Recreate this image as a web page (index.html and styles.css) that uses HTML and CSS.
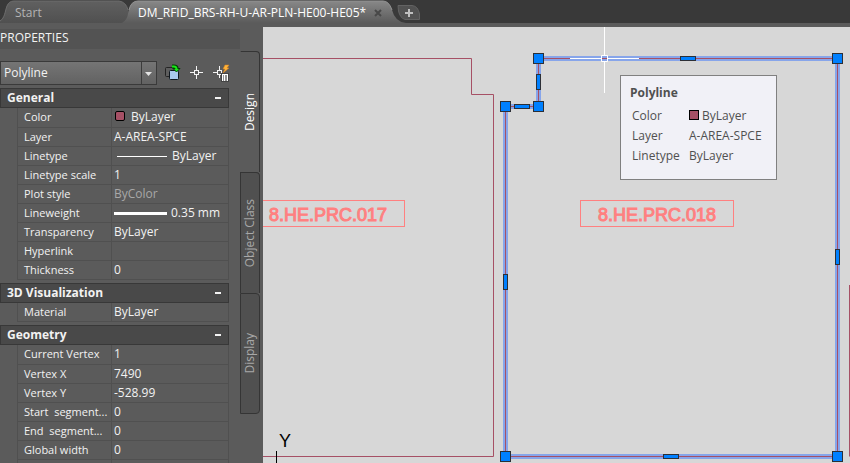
FILE: index.html
```html
<!DOCTYPE html>
<html lang="en">
<head>
<meta charset="utf-8">
<meta name="viewport" content="width=device-width, initial-scale=1">
<title>DM_RFID_BRS-RH-U-AR-PLN-HE00-HE05</title>
<link rel="stylesheet" href="styles.css">
</head>
<body>
<div class="app">
  <nav class="file-tabs" aria-label="Open files">
    <button class="file-tab file-tab-start" type="button">
      <svg class="tab-shape" width="142" height="23" viewBox="0 0 142 23" aria-hidden="true">
        <defs><linearGradient id="idle" x1="0" y1="0" x2="0" y2="1"><stop offset="0" stop-color="#606060"/><stop offset="1" stop-color="#505050"/></linearGradient></defs>
        <path d="M0 23V21C5 18 5 11 7 6Q9 1 14 1H119Q126 2 128 10Q130 20 138 23Z" fill="url(#idle)"/>
        <path d="M0 21C5 18 5 11 7 6Q9 1 14 1H119Q126 2 128 10" fill="none" stroke="#6d6d6d"/>
      </svg>
      <span>Start</span>
    </button>
    <button class="file-tab file-tab-active" type="button">
      <svg class="tab-shape" width="286" height="23" viewBox="0 0 286 23" aria-hidden="true">
        <defs><linearGradient id="live" x1="0" y1="0" x2="0" y2="1"><stop offset="0" stop-color="#888888"/><stop offset="1" stop-color="#5b5b5b"/></linearGradient></defs>
        <path d="M0 23Q5 20 6 14Q8 1 16 1H261Q267 1 270 10Q273 22 284 23Z" fill="url(#live)"/>
        <path d="M7 10Q9 1 16 1H261Q267 1 270 10" fill="none" stroke="#929292"/>
      </svg>
      <span>DM_RFID_BRS-RH-U-AR-PLN-HE00-HE05*</span>
      <svg class="close" width="8" height="8" viewBox="0 0 8 8" aria-hidden="true"><path d="M1 1L7 7M7 1L1 7" stroke="#484848" stroke-width="2"/></svg>
    </button>
    <button class="new-tab" type="button" aria-label="New drawing">
      <svg width="24" height="16" viewBox="0 0 24 16" aria-hidden="true">
        <path d="M1 .5H15Q21 1 22.500 9V14.500H8Q3 13 1.500 6Z" fill="#525252" stroke="#636363"/>
        <path d="M8 8H16M12 4V12" stroke="#c0c0c0" stroke-width="2"/>
      </svg>
    </button>
  </nav>

  <main class="workspace">
    <aside class="palette">
      <div class="palette-body">
        <h1 class="palette-title">PROPERTIES</h1>
        <div class="toolbar">
          <div class="picker">
            <select aria-label="Object type"><option>Polyline</option></select>
            <svg class="picker-arrow" width="15" height="22" viewBox="0 0 15 22" aria-hidden="true"><path d="M.5 0V22" stroke="#3c3c3c"/><path d="M4 10H11L7.500 14Z" fill="#e4e4e4"/></svg>
          </div>
          <button class="tool" type="button" aria-label="Toggle PICKADD">
            <svg width="16" height="18" viewBox="0 0 16 18" aria-hidden="true">
              <rect x=".5" y="3.500" width="9" height="9" rx="1" fill="#5e5e5e" stroke="#242424"/>
              <rect x="4.500" y="6.500" width="9" height="9" rx="1" fill="#a9c9ee" stroke="#101820"/>
              <path d="M7 2.500H9Q11.500 2.500 11.500 4V5" fill="none" stroke="#063d06" stroke-width="4"/>
              <path d="M8 4.500H15L11.500 8Z" fill="#18e818" stroke="#063d06"/>
              <path d="M7 2.500H9Q11.500 2.500 11.500 5" fill="none" stroke="#18e818" stroke-width="2"/>
            </svg>
          </button>
          <button class="tool" type="button" aria-label="Select objects">
            <svg width="14" height="14" viewBox="0 0 14 14" aria-hidden="true"><path d="M6.500 0V4M6.500 9V13M0 6.500H4M9 6.500H13" stroke="#f4f4f4"/><rect x="4.500" y="4.500" width="4" height="4" fill="none" stroke="#f4f4f4"/></svg>
          </button>
          <button class="tool" type="button" aria-label="Quick select">
            <svg width="17" height="18" viewBox="0 0 17 18" aria-hidden="true"><path d="M6.500 2V6M6.500 11V14M0 8.500H4" stroke="#f4f4f4"/><rect x="4.500" y="6.500" width="4" height="4" fill="none" stroke="#f4f4f4"/><path d="M12 1H16L14 4H16L10 9L12 5H10Z" fill="#ffb43a" stroke="#d8801c" stroke-width=".5"/><rect x="8.500" y="9.500" width="7" height="8" fill="#fff" stroke="#444"/><path d="M10 12H14M10 14H14M10 16H14" stroke="#222" stroke-dasharray="1 1 2"/></svg>
          </button>
        </div>

        <section class="group">
          <h2><button type="button">General<span class="collapse"></span></button></h2>
          <table>
            <tr><th scope="row">Color</th><td><span class="swatch"></span>ByLayer</td></tr>
            <tr><th scope="row">Layer</th><td>A-AREA-SPCE</td></tr>
            <tr><th scope="row">Linetype</th><td><span class="line line-thin"></span>ByLayer</td></tr>
            <tr><th scope="row">Linetype scale</th><td>1</td></tr>
            <tr><th scope="row">Plot style</th><td class="muted">ByColor</td></tr>
            <tr><th scope="row">Lineweight</th><td><span class="line line-thick"></span>0.35 mm</td></tr>
            <tr><th scope="row">Transparency</th><td>ByLayer</td></tr>
            <tr><th scope="row">Hyperlink</th><td></td></tr>
            <tr><th scope="row">Thickness</th><td>0</td></tr>
          </table>
        </section>
        <section class="group">
          <h2><button type="button">3D Visualization<span class="collapse"></span></button></h2>
          <table>
            <tr><th scope="row">Material</th><td>ByLayer</td></tr>
          </table>
        </section>
        <section class="group">
          <h2><button type="button">Geometry<span class="collapse"></span></button></h2>
          <table>
            <tr><th scope="row">Current Vertex</th><td>1</td></tr>
            <tr><th scope="row">Vertex X</th><td>7490</td></tr>
            <tr><th scope="row">Vertex Y</th><td>-528.99</td></tr>
            <tr><th scope="row">Start&nbsp; segment...</th><td>0</td></tr>
            <tr><th scope="row">End&nbsp; segment...</th><td>0</td></tr>
            <tr><th scope="row">Global width</th><td>0</td></tr>
            <tr><th scope="row"></th><td>0</td></tr>
          </table>
        </section>
      </div>
      <div class="side-tabs">
        <button class="side-tab side-tab-active" type="button"><span>Design</span></button>
        <button class="side-tab" type="button"><span>Object Class</span></button>
        <button class="side-tab" type="button"><span>Display</span></button>
      </div>
    </aside>

    <section class="canvas" aria-label="Drawing">
      <svg class="drawing" width="100%" height="100%">
        <g class="outline">
          <path d="M-1 31.500H208.500V67.500H230.500V429.500H-1"/>
          <path d="M586.500 258V429.500"/>
        </g>
        <g class="tag">
          <rect x="-10.500" y="173.500" width="152" height="26"/>
          <rect x="317.500" y="173.500" width="153" height="26"/>
          <text x="65" y="194">8.HE.PRC.017</text>
          <text x="394" y="194">8.HE.PRC.018</text>
        </g>
        <path class="halo" d="M275.500 31.500H574.500V429.500H242.500V79.500H275.500Z"/>
        <path class="edge" d="M275.500 31.500H574.500V429.500H242.500V79.500H275.500Z"/>
        <g class="grip">
          <rect x="270.500" y="26.500" width="10" height="10"/>
          <rect x="569.500" y="26.500" width="10" height="10"/>
          <rect x="569.500" y="424.500" width="10" height="10"/>
          <rect x="237.500" y="424.500" width="10" height="10"/>
          <rect x="237.500" y="74.500" width="10" height="10"/>
          <rect x="270.500" y="74.500" width="10" height="10"/>
          <rect x="417.500" y="29.500" width="15" height="4"/>
          <rect x="400.500" y="427.500" width="15" height="4"/>
          <rect x="251.500" y="77.500" width="15" height="4"/>
          <rect x="273.500" y="47.500" width="4" height="15"/>
          <rect x="572.500" y="222.500" width="4" height="15"/>
          <rect x="240.500" y="247.500" width="4" height="15"/>
        </g>
        <path class="cursor" d="M307 31.500H338M345 31.500H376M341.500 0V28M341.500 35V66M338.500 28.500H344.500V34.500H338.500Z"/>
        <path class="axis" d="M13.500 424V436"/>
        <text class="axis-name" x="22" y="420" text-anchor="middle">Y</text>
      </svg>
      <div class="tooltip" role="tooltip">
        <strong>Polyline</strong>
        <dl>
          <dt>Color</dt><dd><span class="swatch"></span>ByLayer</dd>
          <dt>Layer</dt><dd>A-AREA-SPCE</dd>
          <dt>Linetype</dt><dd>ByLayer</dd>
        </dl>
      </div>
    </section>
  </main>
</div>
</body>
</html>
```
FILE: styles.css
```css
* { box-sizing: border-box; }
body {
  margin: 0;
  background: #5b5b5b;
  color: #f2f2f2;
  font: 12px/18px "Open Sans", "Noto Sans", sans-serif;
}
button, select { font: inherit; color: inherit; border: 0; padding: 0; background: none; }
svg { display: block; }
.app { display: flex; flex-direction: column; height: 100vh; overflow: hidden; }

.file-tabs {
  flex: none;
  display: flex;
  height: 27px;
  background: #393939;
  border-bottom: 4px solid #5b5b5b;
}
.file-tab { position: relative; display: flex; align-items: center; height: 23px; padding-top: 3px; white-space: nowrap; }
.file-tab span { position: relative; }
.file-tab-start { width: 122px; padding-left: 15px; color: #b4b4b4; }
.file-tab-active { width: 275px; padding-left: 16px; color: #fff; }
.tab-shape { position: absolute; left: 0; top: 0; }
.close { position: relative; margin-left: 8px; }
.new-tab { padding-top: 3px; }

.workspace { flex: 1; display: flex; min-height: 0; }
.palette { flex: none; display: flex; width: 263px; overflow: hidden; }
.palette-body { width: 240px; }
.palette-title {
  margin: 2px 0 0;
  height: 20px;
  background: #535353;
  font-size: 12px;
  line-height: 18px;
  font-weight: 400;
}
.toolbar { display: flex; align-items: center; height: 24px; margin: 12px 0 3px; }
.picker { position: relative; width: 157px; margin-right: 8px; border: 1px solid #3a3a3a; background: linear-gradient(#757575, #626262); }
.picker select { display: block; appearance: none; width: 100%; height: 22px; padding-left: 3px; }
.picker-arrow { position: absolute; right: 0; top: 0; pointer-events: none; }
.tool { margin-right: 9px; }

.group { width: 229px; margin-bottom: 3px; }
.group h2 { margin: 0; font-size: 12px; line-height: 18px; }
.group h2 button {
  display: flex;
  align-items: center;
  justify-content: space-between;
  width: 100%;
  height: 20px;
  padding: 0 7px 0 6px;
  border: 1px solid #383838;
  background: #494949;
  font-weight: 700;
}
.collapse { width: 6px; height: 2px; background: #f2f2f2; }
.group table { width: 212px; margin-left: 17px; border-collapse: collapse; table-layout: fixed; }
.group th, .group td {
  height: 19px;
  padding: 0 0 0 6px;
  border: 1px solid #505050;
  border-top: 0;
  line-height: 18px;
  font-weight: 400;
  text-align: left;
  white-space: nowrap;
}
.group th { width: 94px; font-size: 11px; }
.group td { padding-left: 2px; }
.group .muted { color: #a8a8a8; }
.swatch { display: inline-block; width: 10px; height: 10px; margin-right: 6px; border: 1px solid #000; background: #a65065; }
.group .swatch { margin-left: 1px; border-radius: 2px; }
.line { display: inline-block; vertical-align: middle; background: #fff; }
.line-thin { width: 50px; height: 1px; margin: 0 5px 0 3px; }
.line-thick { width: 53px; height: 3px; margin-right: 4px; }

.side-tabs { width: 20px; padding-top: 24px; }
.side-tab {
  display: flex;
  justify-content: center;
  align-items: center;
  width: 20px;
  height: 121px;
  border: 1px solid #353535;
  border-bottom: 0;
  border-radius: 0 4px 0 0;
  background: #505050;
  color: #a8a8a8;
}
.side-tab:last-child { border-bottom: 1px solid #353535; border-radius: 0 4px 4px 0; }
.side-tab-active { background: #5b5b5b; border-left-color: #5b5b5b; color: #fff; }
.side-tab span { writing-mode: vertical-rl; transform: rotate(180deg); white-space: nowrap; }

.canvas { position: relative; flex: 1; min-width: 0; overflow: hidden; background: #d7d7d7; }
.outline, .edge { fill: none; stroke: #a65065; }
.halo { fill: none; stroke: #87a5ea; stroke-width: 5px; }
.grip { fill: #0080ff; stroke: #2c2f36; }
.cursor { fill: none; stroke: #fff; }
.axis { stroke: #000; }
.axis-name { font: 18px "Liberation Sans", sans-serif; fill: #000; }
.tag rect { fill: none; stroke: #ff8080; }
.tag text { font: 18px "Liberation Sans", sans-serif; fill: #ff8080; stroke: #ff8080; text-anchor: middle; }

.tooltip {
  position: absolute;
  left: 357px;
  top: 48px;
  width: 157px;
  height: 105px;
  padding: 8px 9px;
  border: 1px solid #808080;
  background: #f1f1f7;
  color: #505050;
}
.tooltip strong { display: block; }
.tooltip dl { display: grid; grid-template-columns: 57px 1fr; margin: 4px 0 0 2px; line-height: 20px; white-space: nowrap; }
.tooltip dd { margin: 0; }
.tooltip .swatch { margin-right: 3px; }
```
